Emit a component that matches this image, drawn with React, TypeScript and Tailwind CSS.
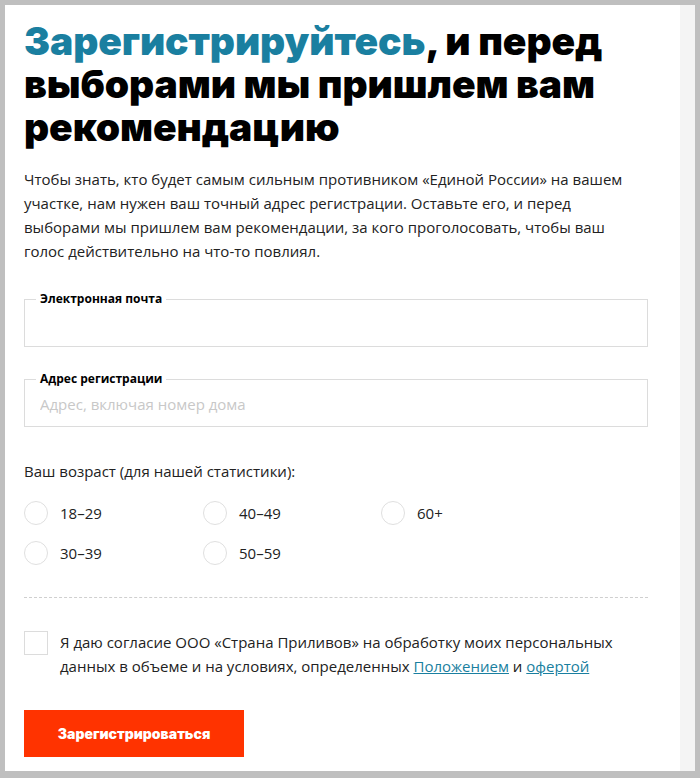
import React, { useState } from 'react';

const ages = ['18–29', '40–49', '60+', '30–39', '50–59'];

export default function App() {
  const [age, setAge] = useState<string | null>(null);
  const [agree, setAgree] = useState(false);

  return (
    <div className="w-[700px] h-[778px] bg-[#bfbfbf] pt-[5px] pl-[5px] pr-[5px] pb-[7px] flex">
      <div className="flex-1 flex bg-white">
        <div className="flex-1 pl-[19px] pr-[32px] pt-[14px] text-[#222]" style={{ fontFamily: '"Open Sans", "Noto Sans", sans-serif' }}>
          <h1
            className="text-[39px] leading-[43px] font-black tracking-[-0.1px] text-black"
            style={{ fontFamily: 'Inter, "Liberation Sans", sans-serif' }}
          >
            <span className="text-[#1a7fa0]">Зарегистрируйтесь</span>, и перед выборами мы пришлем вам рекомендацию
          </h1>

          <p className="mt-[19px] text-[15px] leading-[24px] text-[#222]">
            Чтобы знать, кто будет самым сильным противником «Единой России» на вашем участке, нам нужен ваш точный адрес регистрации. Оставьте его, и перед выборами мы пришлем вам рекомендации, за кого проголосовать, чтобы ваш голос действительно на что-то повлиял.
          </p>

          <div className="mt-[36px] relative">
            <label className="absolute left-[12px] -top-[8px] bg-white px-1 text-[12px] leading-[16px] font-bold text-black">
              Электронная почта
            </label>
            <input
              type="email"
              className="w-full h-[48px] border border-[#dcdcdc] px-[15px] pt-[6px] text-[15px] outline-none"
            />
          </div>

          <div className="mt-[32px] relative">
            <label className="absolute left-[12px] -top-[8px] bg-white px-1 text-[12px] leading-[16px] font-bold text-black">
              Адрес регистрации
            </label>
            <input
              type="text"
              placeholder="Адрес, включая номер дома"
              className="w-full h-[48px] border border-[#dcdcdc] px-[15px] pt-[2px] text-[15px] outline-none placeholder:text-[#c8c8c8]"
            />
          </div>

          <div className="mt-[32px] text-[15px] leading-[24px]">Ваш возраст (для нашей статистики):</div>

          <div className="mt-[18px] grid grid-cols-[179px_178px_1fr] gap-y-[16px]">
            {ages.map((a) => (
              <label key={a} className="flex items-center gap-[12px] cursor-pointer text-[15px] leading-[24px]">
                <span className="w-[24px] h-[24px] rounded-full border border-[#e0e0e0] flex items-center justify-center">
                  {age === a && <span className="w-[10px] h-[10px] rounded-full bg-[#1a7fa0]" />}
                </span>
                <input type="radio" name="age" className="hidden" checked={age === a} onChange={() => setAge(a)} />
                {a}
              </label>
            ))}
          </div>

          <div className="mt-[32px] border-t border-dashed border-[#cfcfcf]" />

          <label className="mt-[32px] flex gap-[12px] cursor-pointer">
            <span className="shrink-0 w-[24px] h-[24px] border border-[#dcdcdc] mt-[1px]">
              {agree && <span className="block w-full h-full bg-[#1a7fa0]" />}
            </span>
            <input type="checkbox" className="hidden" checked={agree} onChange={(e) => setAgree(e.target.checked)} />
            <span className="text-[15px] leading-[24px] text-[#222]">
              Я даю согласие ООО «Страна Приливов» на обработку моих персональных данных в объеме и на условиях, определенных{' '}
              <a href="#" className="text-[#1a7fa0] underline">Положением</a> и{' '}
              <a href="#" className="text-[#1a7fa0] underline">офертой</a>
            </span>
          </label>

          <button
            className="mt-[32px] w-[220px] h-[47px] bg-[#ff3300] text-white text-[14px] font-black"
            style={{ fontFamily: 'Inter, "Liberation Sans", sans-serif' }}
          >
            Зарегистрироваться
          </button>
        </div>
        <div className="w-[15px] bg-[#f4f4f4]" />
      </div>
    </div>
  );
}
